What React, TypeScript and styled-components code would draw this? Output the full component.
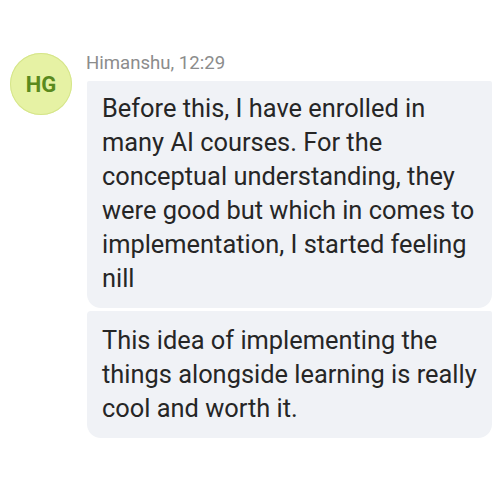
import React from "react";
import styled, { createGlobalStyle } from "styled-components";

const Global = createGlobalStyle`
  html, body { margin: 0; padding: 0; background: #ffffff; }
  body { font-family: Roboto, "Noto Sans", "Liberation Sans", sans-serif; }
`;

const Page = styled.div`
  width: 500px;
  height: 500px;
  box-sizing: border-box;
  padding: 53px 8px 0 10px;
  display: flex;
  align-items: flex-start;
  gap: 15px;
`;

const Avatar = styled.div`
  flex: 0 0 auto;
  width: 62px;
  height: 62px;
  border-radius: 50%;
  background: #e6f2a4;
  box-shadow: inset 0 0 0 1px #d5e58a;
  display: flex;
  align-items: center;
  justify-content: center;
  color: #5a8a1e;
  font-weight: 700;
  font-size: 22px;
`;

const Column = styled.div`
  flex: 1 1 auto;
  display: flex;
  flex-direction: column;
`;

const Name = styled.div`
  color: #8c8c8c;
  font-size: 18.6px;
  line-height: 21px;
  margin-bottom: 7px;
  margin-left: -1px;
`;

const Bubble = styled.div<{ $last?: boolean }>`
  background: #f0f2f6;
  color: #262626;
  font-size: 25.4px;
  line-height: 34px;
  padding: ${(p) => (p.$last ? "12px 14px 13px 15px" : "10px 14px 13px 15px")};
  border-radius: ${(p) => (p.$last ? "4px 2px 14px 14px" : "2px 2px 14px 14px")};
  margin-bottom: 3px;
`;

export default function App() {
  return (
    <>
      <Global />
      <Page>
        <Avatar>HG</Avatar>
        <Column>
          <Name>Himanshu, 12:29</Name>
          <Bubble>
            Before this, I have enrolled in many AI courses. For the conceptual understanding, they
            were good but which in comes to implementation, I started feeling nill
          </Bubble>
          <Bubble $last>
            This idea of implementing the things alongside learning is really cool and worth it.
          </Bubble>
        </Column>
      </Page>
    </>
  );
}
